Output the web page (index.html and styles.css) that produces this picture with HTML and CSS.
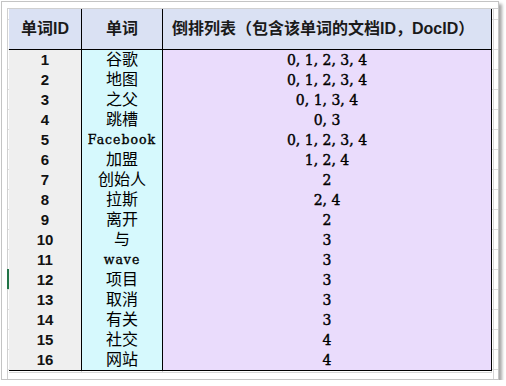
FILE: index.html
```html
<!DOCTYPE html>
<html lang="zh">
<head>
<meta charset="utf-8">
<title>倒排列表</title>
<link rel="stylesheet" href="styles.css">
</head>
<body>
<div class="frame">
  <div class="sheet">
    <div class="sel-mark"></div>
    <div class="grid">
      <div class="cell head c1">单词ID</div>
      <div class="cell head c2">单词</div>
      <div class="cell head c3">倒排列表（包含该单词的文档ID，DocID）</div>

      <div class="cell c1">1</div><div class="cell c2">谷歌</div><div class="cell c3">0, 1, 2, 3, 4</div>
      <div class="cell c1">2</div><div class="cell c2">地图</div><div class="cell c3">0, 1, 2, 3, 4</div>
      <div class="cell c1">3</div><div class="cell c2">之父</div><div class="cell c3">0, 1, 3, 4</div>
      <div class="cell c1">4</div><div class="cell c2">跳槽</div><div class="cell c3">0, 3</div>
      <div class="cell c1">5</div><div class="cell c2 latin">Facebook</div><div class="cell c3">0, 1, 2, 3, 4</div>
      <div class="cell c1">6</div><div class="cell c2">加盟</div><div class="cell c3">1, 2, 4</div>
      <div class="cell c1">7</div><div class="cell c2">创始人</div><div class="cell c3">2</div>
      <div class="cell c1">8</div><div class="cell c2">拉斯</div><div class="cell c3">2, 4</div>
      <div class="cell c1">9</div><div class="cell c2">离开</div><div class="cell c3">2</div>
      <div class="cell c1">10</div><div class="cell c2">与</div><div class="cell c3">3</div>
      <div class="cell c1">11</div><div class="cell c2 latin">wave</div><div class="cell c3">3</div>
      <div class="cell c1">12</div><div class="cell c2">项目</div><div class="cell c3">3</div>
      <div class="cell c1">13</div><div class="cell c2">取消</div><div class="cell c3">3</div>
      <div class="cell c1">14</div><div class="cell c2">有关</div><div class="cell c3">3</div>
      <div class="cell c1">15</div><div class="cell c2">社交</div><div class="cell c3">4</div>
      <div class="cell c1">16</div><div class="cell c2">网站</div><div class="cell c3">4</div>
    </div>
    <div class="nextrow">
      <div class="n1"></div><div class="n2"></div><div class="n3"></div>
    </div>
  </div>
</div>
</body>
</html>
```

FILE: styles.css
```css
html, body {
  margin: 0;
  padding: 0;
  background: #ffffff;
}

.frame {
  margin: 1px 0 0 1px;
  border: 1px solid #c4c4c4;
  box-shadow: 3px 3px 3px rgba(0, 0, 0, 0.35);
  background: #ffffff;
  padding: 6px 0 0 5px;
  box-sizing: border-box;
  width: 498px;
  height: 379px;
  overflow: hidden;
}

.sheet {
  position: relative;
  border-left: 1px solid #d0d0d0;
  border-top: 1px solid #d0d0d0;
  height: 100%;
  box-sizing: border-box;
  background-image:
    linear-gradient(to right, transparent 0 485px, #d6d6d6 485px 486px, transparent 486px),
    repeating-linear-gradient(to bottom, transparent 0 19px, #dcdcdc 19px 20px);
  background-position: 0 0, 0 21px;
  background-repeat: no-repeat, repeat-y;
  padding-left: 1px;
}

.sel-mark {
  position: absolute;
  left: -1px;
  top: 260px;
  width: 2px;
  height: 20px;
  background: #217346;
}

.grid {
  display: grid;
  grid-template-columns: 73px 81px 329px;
  grid-template-rows: 41px repeat(16, 20px);
  width: 483px;
  border-bottom: 1px solid #000;
}

.cell {
  display: flex;
  align-items: center;
  justify-content: center;
  white-space: nowrap;
  color: #000;
  box-sizing: border-box;
  line-height: 20px;
}

.c1 {
  background: #efefef;
  border-right: 1px solid #000;
  font-family: "Liberation Sans", "Noto Sans CJK SC", sans-serif;
  font-weight: 700;
  font-size: 15px;
  color: #111;
}

.c2 {
  background: #d6f9fd;
  border-right: 1px solid #000;
  font-family: "Liberation Sans", "Noto Sans CJK SC", sans-serif;
  font-size: 16px;
}

.c2.latin {
  font-family: "DejaVu Serif", serif;
  font-size: 12.5px;
  font-weight: 400;
  letter-spacing: 1px;
  -webkit-text-stroke: 0.35px #000;
}

.c3 {
  background: #eadcfc;
  border-right: 1px solid #000;
  font-family: "DejaVu Serif", serif;
  font-weight: 400;
  font-size: 14px;
  -webkit-text-stroke: 0.4px #000;
}

.head {
  background: #dae1f3;
  border-bottom: 1px solid #000;
  font-family: "Liberation Sans", "Noto Sans CJK SC", sans-serif;
  font-weight: 700;
  font-size: 16px;
  color: #1a1a1a;
  -webkit-text-stroke: 0;
}

.head.c3 {
  justify-content: flex-start;
  padding-left: 9px;
}

.nextrow {
  display: grid;
  grid-template-columns: 73px 81px 329px;
  width: 483px;
  height: 2px;
  background: #ffffff;
}

.nextrow > div {
  border-right: 1px solid #d6d6d6;
  border-bottom: 1px solid #d6d6d6;
}
```
